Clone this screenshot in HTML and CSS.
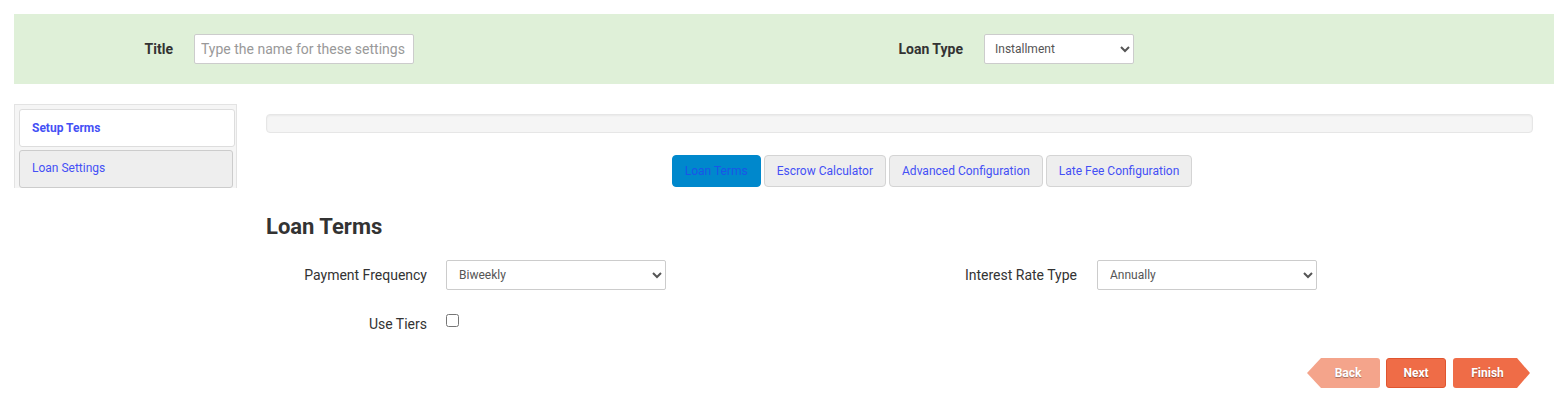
FILE: index.html
```html
<!DOCTYPE html>
<html lang="en">

<head>
    <meta charset="UTF-8">
    <meta name="viewport" content="width=device-width, initial-scale=1.0">
    <title>Loan Setup</title>
    <link rel="stylesheet" href="styles.css">
</head>

<body>

    <div class="header">
        <label class="header-label title-label" for="title">Title</label>
        <input id="title" class="title-input" type="text" placeholder="Type the name for these settings">

        <label class="header-label type-label" for="loanType">Loan Type</label>
        <select id="loanType" class="type-select">
            <option>Installment</option>
            <option>Line of Credit</option>
        </select>
    </div>

    <div class="main">
        <div class="sidebar">
            <div class="side-item active">Setup Terms</div>
            <div class="side-item">Loan Settings</div>
        </div>

        <div class="content">
            <div class="progress"></div>

            <div class="tabs">
                <button class="tab active">Loan Terms</button>
                <button class="tab">Escrow Calculator</button>
                <button class="tab">Advanced Configuration</button>
                <button class="tab">Late Fee Configuration</button>
            </div>

            <h2>Loan Terms</h2>

            <div class="form-row">
                <label class="form-label" for="frequency">Payment Frequency</label>
                <select id="frequency" class="form-select">
                    <option>Biweekly</option>
                    <option>Monthly</option>
                    <option>Weekly</option>
                </select>

                <label class="form-label wide" for="rateType">Interest Rate Type</label>
                <select id="rateType" class="form-select">
                    <option>Annually</option>
                    <option>Monthly</option>
                </select>
            </div>

            <div class="form-row">
                <label class="form-label" for="tiers">Use Tiers</label>
                <input id="tiers" class="check" type="checkbox">
            </div>

            <div class="actions">
                <button class="step back">Back</button>
                <button class="step next">Next</button>
                <button class="step finish">Finish</button>
            </div>
        </div>
    </div>

</body>

</html>
```

FILE: styles.css
```css
body {
    font-family: Roboto, Arial, sans-serif;
    font-size: 14px;
    color: #333;
    background-color: #fff;
    margin: 0;
    padding: 14px 10px 0 14px;
}

.header {
    display: flex;
    align-items: center;
    height: 70px;
    background: #dff0d8;
}

.header-label {
    font-weight: bold;
    text-align: right;
    color: #333;
}

.title-label {
    width: 159px;
    margin-right: 21px;
}

.type-label {
    width: 159px;
    margin-left: 390px;
    margin-right: 21px;
}

.title-input,
.type-select,
.form-select {
    box-sizing: border-box;
    height: 30px;
    border: 1px solid #ccc;
    border-radius: 2px;
    background: white;
    font-family: Roboto, Arial, sans-serif;
    color: #555;
}

.title-input {
    width: 220px;
    padding: 0 6px;
    font-size: 14px;
}

.title-input::placeholder {
    color: #999;
}

.type-select {
    width: 150px;
    padding: 0 6px;
    font-size: 12px;
}

.main {
    display: flex;
    margin-top: 20px;
}

.sidebar {
    box-sizing: border-box;
    width: 223px;
    height: 84px;
    padding: 4px 1px 0 4px;
    background: #f5f5f5;
    border: 1px solid #e3e3e3;
    border-bottom: none;
    overflow: hidden;
    flex-shrink: 0;
}

.side-item {
    height: 36px;
    line-height: 35px;
    padding-left: 12px;
    margin-bottom: 3px;
    font-size: 12px;
    color: #4450f5;
    background: #eee;
    border: 1px solid #ccc;
    border-radius: 3px;
    margin-right: 2px;
}

.side-item.active {
    background: white;
    border-color: #ddd;
    font-weight: bold;
    margin-right: 0;
    line-height: 36px;
}

.content {
    flex: 1;
    margin-left: 29px;
    margin-right: 21px;
    padding-top: 10px;
}

.progress {
    height: 17px;
    background: #f5f5f5;
    border: 1px solid #e6e6e6;
    border-radius: 4px;
    box-shadow: inset 0 1px 2px rgba(0, 0, 0, 0.05);
}

.tabs {
    display: flex;
    justify-content: center;
    gap: 3px;
    margin-top: 22px;
    padding-left: 65px;
}

.tab {
    height: 32px;
    padding: 0 12px;
    font-family: Roboto, Arial, sans-serif;
    font-size: 12px;
    color: #4450f5;
    background: #eee;
    border: 1px solid #d4d4d4;
    border-radius: 4px;
    cursor: pointer;
}

.tab.active {
    background: #0088cc;
    border-color: #0088cc;
    color: #1a55e8;
}

h2 {
    font-size: 22px;
    font-weight: bold;
    color: #333;
    margin: 27px 0 20px 0;
    line-height: 26px;
}

.form-row {
    display: flex;
    align-items: center;
    height: 30px;
    margin-bottom: 19px;
}

.form-label {
    width: 161px;
    margin-right: 19px;
    text-align: right;
    font-size: 14px;
    color: #333;
}

.form-label.wide {
    width: 391px;
    margin-left: 20px;
    margin-right: 20px;
}

.form-select {
    width: 220px;
    padding: 0 8px;
    font-size: 12px;
}

.check {
    width: 13px;
    height: 13px;
    margin: -7px 0 0 0;
}

.actions {
    display: flex;
    justify-content: flex-end;
    gap: 6px;
    margin-top: 3px;
    margin-right: 3px;
}

.step {
    height: 30px;
    width: 60px;
    font-family: Roboto, Arial, sans-serif;
    font-size: 12px;
    font-weight: bold;
    color: white;
    text-shadow: 0 1px 1px rgba(0, 0, 0, 0.35);
    background: #ef6c47;
    border: 1px solid #e0552f;
    border-radius: 3px;
    cursor: pointer;
}

.step.back {
    width: 73px;
    padding-left: 15px;
    background: #f4a48b;
    border: none;
    clip-path: polygon(14px 0, 100% 0, 100% 100%, 14px 100%, 0 50%);
}

.step.finish {
    width: 77px;
    padding-right: 14px;
    margin-left: 1px;
    border: none;
    clip-path: polygon(0 0, calc(100% - 13px) 0, 100% 50%, calc(100% - 13px) 100%, 0 100%);
}
```
